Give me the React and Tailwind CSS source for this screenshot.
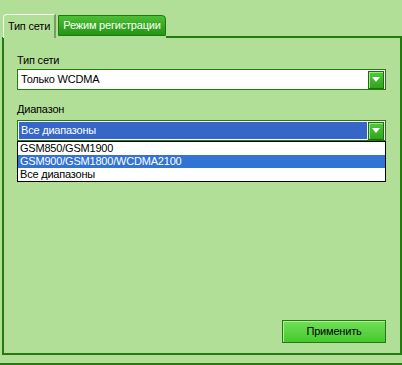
export default function App() {
  const options = ['GSM850/GSM1900', 'GSM900/GSM1800/WCDMA2100', 'Все диапазоны']

  const Arrow = () => (
    <div className="w-[16px] h-[18px] border border-[#1f6e0c] bg-gradient-to-b from-[#4fcc3a] to-[#2fa41f] flex items-center justify-center shadow-[inset_1px_1px_0_#9ee88c]">
      <svg width="8" height="5" viewBox="0 0 8 5">
        <path d="M0 0h8L4 5z" fill="#ffffff" />
      </svg>
    </div>
  )

  return (
    <div className="w-[402px] h-[365px] bg-[#b2df97] font-['Liberation_Sans',sans-serif] text-[11px] tracking-[-0.2px] text-black flex flex-col overflow-hidden">
      <div className="flex items-end h-[37px] pl-[3px]">
        <div className="h-[24px] w-[53px] bg-[#b2df97] border-l border-t border-[#f4fbef] rounded-tl-[4px] border-r-2 border-r-[#7a9a6a] flex items-center justify-center whitespace-nowrap relative top-[1px] z-10">
          Тип сети
        </div>
        <div className="ml-[2px] mb-[1px] h-[21px] w-[108px] bg-gradient-to-b from-[#4cc033] to-[#229414] border border-[#1e7a0c] rounded-tr-[4px] text-white flex items-center justify-center whitespace-nowrap">
          Режим регистрации
        </div>
        <div className="flex-1 border-b-2 border-[#237a0e] mb-[-1px]"></div>
      </div>
      <div className="ml-[2px] h-[318px] border-l-2 border-b-2 border-r-2 border-[#237a0e] border-t-0 flex flex-col pl-[13px] pr-[14px]">
        <div className="mt-[17px] leading-[13px]">Тип сети</div>
        <div className="mt-[2px] h-[21px] border border-[#237a0e] bg-white flex items-center justify-between pl-[3px] pr-[1px]">
          <span>Только WCDMA</span>
          <Arrow />
        </div>
        <div className="mt-[13px] leading-[13px]">Диапазон</div>
        <div className="mt-[4px] h-[21px] border border-[#237a0e] bg-white flex items-center justify-between pl-[1px] pr-[1px]">
          <span className="h-[17px] flex-1 mr-[1px] bg-[#3566c8] text-white pl-[2px] flex items-center">Все диапазоны</span>
          <Arrow />
        </div>
        <div className="border border-black bg-white flex flex-col">
          {options.map((o, i) => (
            <div
              key={o}
              className={`h-[13px] leading-[13px] pl-[2px] ${i === 1 ? 'bg-[#3473d6] text-white' : ''}`}
            >
              {o}
            </div>
          ))}
        </div>
        <div className="flex-1"></div>
        <div className="flex justify-end mb-[10px]">
          <button className="w-[104px] h-[23px] border border-[#237a0e] bg-gradient-to-b from-[#6fe055] to-[#45c82e] text-black shadow-[inset_1px_1px_0_#a8f295]">
            Применить
          </button>
        </div>
      </div>
      <div className="mt-[8px] border-t-2 border-[#237a0e]"></div>
    </div>
  )
}
